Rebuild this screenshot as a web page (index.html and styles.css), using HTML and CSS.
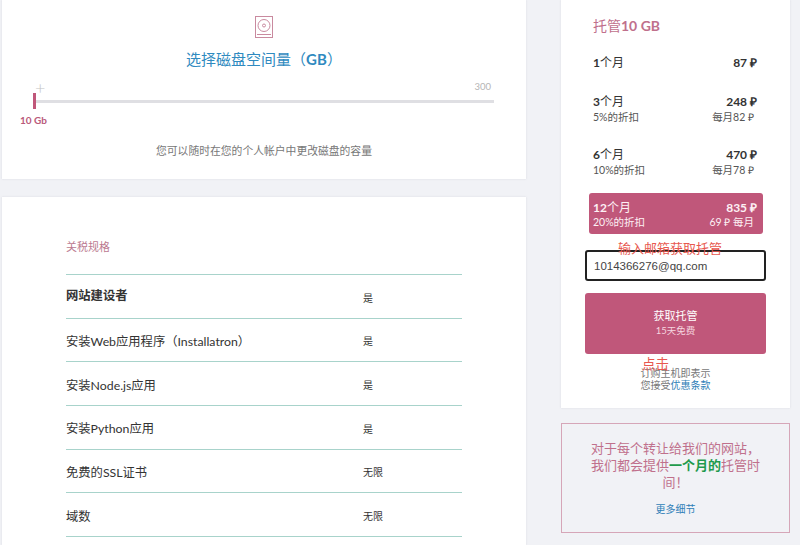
FILE: index.html
```html
<!DOCTYPE html>
<html lang="zh">
<head>
<meta charset="utf-8">
<title>托管</title>
<link rel="stylesheet" href="styles.css">
</head>
<body>
<div class="page">
  <main class="left">
    <section class="card disk">
      <svg class="disk-icon" width="18" height="22" viewBox="0 0 18 22" fill="none" stroke="#c98a9f" stroke-width="1">
        <rect x="0.5" y="0.5" width="17" height="21"/>
        <circle cx="9" cy="9.5" r="6"/>
        <circle cx="9" cy="9.5" r="1.5"/>
        <path d="M2 18.5h14"/>
      </svg>
      <h2 class="disk-title">选择磁盘空间量（<b>GB</b>）</h2>
      <div class="slider">
        <div class="slider-top"><span class="plus">+</span><span class="max">300</span></div>
        <div class="track"><span class="thumb"></span></div>
        <div class="current">10 Gb</div>
      </div>
      <p class="hint">您可以随时在您的个人帐户中更改磁盘的容量</p>
    </section>
    <section class="card specs">
      <h3 class="specs-title">关税规格</h3>
      <div class="row"><span class="name strong">网站建设者</span><span class="val">是</span></div>
      <div class="row"><span class="name">安装Web应用程序（Installatron）</span><span class="val">是</span></div>
      <div class="row"><span class="name">安装Node.js应用</span><span class="val">是</span></div>
      <div class="row"><span class="name">安装Python应用</span><span class="val">是</span></div>
      <div class="row"><span class="name">免费的SSL证书</span><span class="val">无限</span></div>
      <div class="row"><span class="name">域数</span><span class="val">无限</span></div>
    </section>
  </main>
  <aside class="right">
    <section class="card order">
      <h3 class="order-title">托管<b>10 GB</b></h3>
      <div class="plan first">
        <div class="line"><span><b>1</b>个月</span><b>87 ₽</b></div>
      </div>
      <div class="plan">
        <div class="line"><span><b>3</b>个月</span><b>248 ₽</b></div>
        <div class="sub"><span>5%的折扣</span><span>每月82 ₽</span></div>
      </div>
      <div class="plan">
        <div class="line"><span><b>6</b>个月</span><b>470 ₽</b></div>
        <div class="sub"><span>10%的折扣</span><span>每月78 ₽</span></div>
      </div>
      <div class="plan active">
        <div class="line"><span><b>12</b>个月</span><b>835 ₽</b></div>
        <div class="sub"><span>20%的折扣</span><span>69 ₽ 每月</span></div>
      </div>
      <div class="form">
        <input class="email" type="text" value="1014366276@qq.com">
        <span class="note note-email">输入邮箱获取托管</span>
        <button class="cta" type="button"><span class="cta-main">获取托管</span><span class="cta-sub">15天免费</span></button>
        <span class="note note-click">点击</span>
        <p class="terms">订购主机即表示<br>您接受<a href="#">优惠条款</a></p>
      </div>
    </section>
    <section class="promo">
      <p class="promo-text">对于每个转让给我们的网站，我们都会提供<b>一个月的</b>托管时间！</p>
      <a class="promo-link" href="#">更多细节</a>
    </section>
  </aside>
</div>
</body>
</html>
```

FILE: styles.css
```css
* { box-sizing: border-box; }
html, body { margin: 0; height: 545px; overflow: hidden; }
body {
  background: #f1f2f6;
  font-family: "Lato", "Noto Sans CJK SC", sans-serif;
  color: #333;
}
a { color: #2f7fb8; text-decoration: none; }
.page { display: flex; align-items: flex-start; padding-left: 2px; }
.left { width: 524px; display: flex; flex-direction: column; gap: 18px; }
.right { width: 229px; margin-left: 35px; display: flex; flex-direction: column; gap: 15px; }
.card { background: #fff; box-shadow: 0 0 2px rgba(120, 120, 140, 0.18); }

.disk { height: 179px; padding-top: 16px; display: flex; flex-direction: column; align-items: center; }
.disk-icon { display: block; }
.disk-title { margin: 10px 0 0; font-size: 15px; line-height: 22px; font-weight: 400; color: #2f8ac0; }
.disk-title b { font-weight: 700; }
.slider { width: 524px; padding: 0 32px 0 30px; margin-top: 9px; }
.slider-top { display: flex; justify-content: space-between; height: 21px; padding-left: 3px; }
.plus { font-size: 18px; line-height: 16px; color: #c4c4c4; font-weight: 300; }
.max { margin-right: 3px; font-size: 9.5px; line-height: 16px; color: #b5b5b5; }
.track { position: relative; height: 3px; margin-left: 1px; background: #dfdfe3; }
.thumb { position: absolute; left: 0; top: -7px; width: 3px; height: 16px; background: #c0577a; }
.current { margin-top: 10px; margin-left: -12px; font-size: 10px; line-height: 14px; font-weight: 700; color: #b9597a; }
.hint { margin: 16px 0 0; font-size: 10.8px; line-height: 16px; color: #777; }

.specs { height: 348px; padding: 41px 64px 0; }
.specs-title { margin: 0 0 18px; font-size: 11px; line-height: 18px; font-weight: 400; color: #bb7a90; }
.row {
  display: flex; align-items: center; height: 43.67px; padding-top: 2px;
  border-top: 1px solid #a8d3cb;
}
.row:last-child { border-bottom: 1px solid #a8d3cb; height: 44.67px; }
.name { width: 297px; font-size: 12.3px; color: #333; }
.name.strong { padding-bottom: 4px; font-weight: 700; }
.val { font-size: 10px; color: #333; }

.order { height: 408px; padding: 16px 33px 0 32px; position: relative; }
.order-title { margin: 0 0 18px; font-size: 14px; line-height: 20px; font-weight: 400; color: #c0708c; }
.order-title b { font-weight: 700; }
.plan { height: 53px; margin: 0 -6px 0 -4px; padding: 0 6px 0 4px; }
.plan.first { height: 39px; }
.line { display: flex; justify-content: space-between; font-size: 12px; line-height: 18px; color: #333; }
.sub { display: flex; justify-content: space-between; padding-right: 3px; font-size: 10.5px; line-height: 13px; color: #555; }
.plan.active {
  height: 41px; margin-top: -6px; padding-top: 6px; border-radius: 3px;
  background: #c0577a; color: #fff;
}
.active .line { line-height: 17px; }
.active .line, .active .sub { color: #fdf0f4; }
.form { position: relative; margin: 16px -8px 0 -8px; text-align: center; }
.email {
  display: block; width: 181px; height: 31px; padding: 0 7px;
  border: 2px solid #222; border-radius: 3px; background: #fff;
  font-family: "Liberation Sans", sans-serif; font-size: 11.5px; color: #444; outline: none;
}
.cta {
  display: flex; flex-direction: column; align-items: center; justify-content: center;
  width: 181px; height: 61px; margin-top: 12px; padding: 0 0 2px; border: 0; border-radius: 3px;
  background: #c0577a; color: #fff; font-family: inherit;
}
.cta-main { font-size: 11px; line-height: 17px; }
.cta-sub { font-size: 9.5px; line-height: 14px; color: #f5d5df; }
.terms { width: 181px; margin: 13px 0 0; font-size: 10px; line-height: 12px; color: #777; }
.note { position: absolute; font-size: 13px; line-height: 16px; color: #e8584f; white-space: nowrap; }
.note-email { left: 33px; top: -10px; }
.note-click { left: 57px; top: 106px; font-size: 13.5px; }

.promo { height: 110px; padding: 16px 27px 0 27px; border: 1px solid #d6a6b8; text-align: center; background: #f1f2f6; }
.promo-text { margin: 0; font-size: 13px; line-height: 17px; color: #c0708c; }
.promo-text b { color: #1f9a4d; font-weight: 700; }
.promo-link { display: block; margin-top: 11px; font-size: 10px; line-height: 14px; }
```
